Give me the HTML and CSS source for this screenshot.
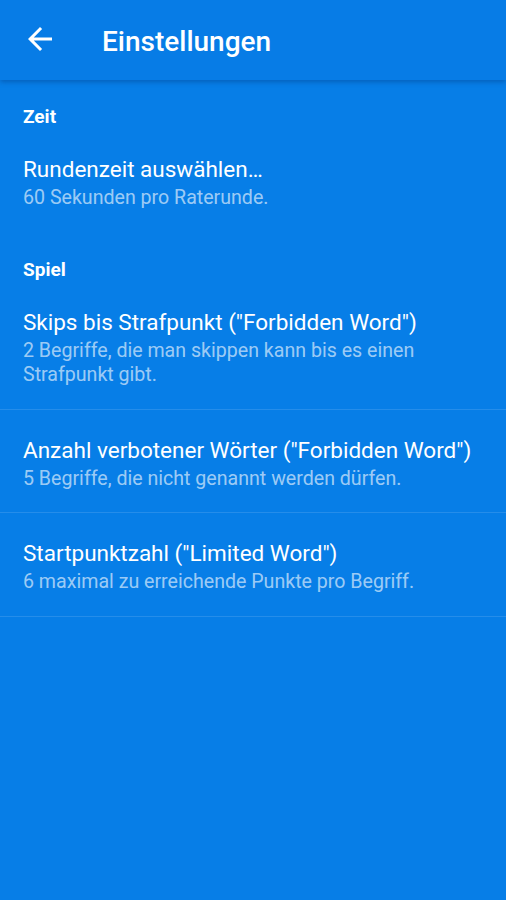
FILE: index.html
```html
<!DOCTYPE html>
<html lang="de">
<head>
<meta charset="utf-8">
<link rel="stylesheet" href="styles.css">
</head>
<body>
<header class="toolbar">
  <svg class="back" viewBox="0 0 24 24" width="36" height="36"><path d="M20 11H7.83l5.59-5.59L12 4l-8 8 8 8 1.41-1.41L7.83 13H20v-2z" fill="#fff"/></svg>
  <h1 class="title">Einstellungen</h1>
</header>
<main>
  <div class="cat">Zeit</div>
  <div class="item last">
    <div class="item-title">Rundenzeit auswählen…</div>
    <div class="item-sub">60 Sekunden pro Raterunde.</div>
  </div>
  <div class="cat">Spiel</div>
  <div class="item">
    <div class="item-title">Skips bis Strafpunkt ("Forbidden Word")</div>
    <div class="item-sub">2 Begriffe, die man skippen kann bis es einen Strafpunkt gibt.</div>
  </div>
  <div class="item">
    <div class="item-title">Anzahl verbotener Wörter ("Forbidden Word")</div>
    <div class="item-sub">5 Begriffe, die nicht genannt werden dürfen.</div>
  </div>
  <div class="item">
    <div class="item-title">Startpunktzahl ("Limited Word")</div>
    <div class="item-sub">6 maximal zu erreichende Punkte pro Begriff.</div>
  </div>
</main>
</body>
</html>
```
FILE: styles.css
```css
html, body {
  margin: 0;
  padding: 0;
}
body {
  background: #077ee7;
  font-family: Roboto, "Noto Sans", sans-serif;
  color: #fff;
  width: 506px;
  height: 900px;
  overflow: hidden;
}
.toolbar {
  height: 80px;
  display: flex;
  align-items: center;
  background: #077ce6;
  box-shadow: 0 2px 5px rgba(0, 40, 100, 0.35);
  position: relative;
  z-index: 1;
}
.back {
  margin-left: 22px;
  margin-top: -2px;
  flex: none;
}
.title {
  margin: 0 0 0 44px;
  font-size: 28px;
  font-weight: 500;
  line-height: 32px;
  padding-top: 4px;
}
.cat {
  padding: 27px 23px 2px;
  font-size: 19px;
  font-weight: 700;
  line-height: 20px;
}
.item {
  padding: 26px 23px 21.5px;
  border-bottom: 1px solid rgba(255, 255, 255, 0.12);
}
.item.last {
  border-bottom: none;
  padding-bottom: 23px;
}
.item-title {
  font-size: 22.5px;
  line-height: 28px;
}
.item-sub {
  margin-top: 3px;
  font-size: 19.6px;
  line-height: 24px;
  color: rgba(255, 255, 255, 0.62);
  max-width: 420px;
}
```
